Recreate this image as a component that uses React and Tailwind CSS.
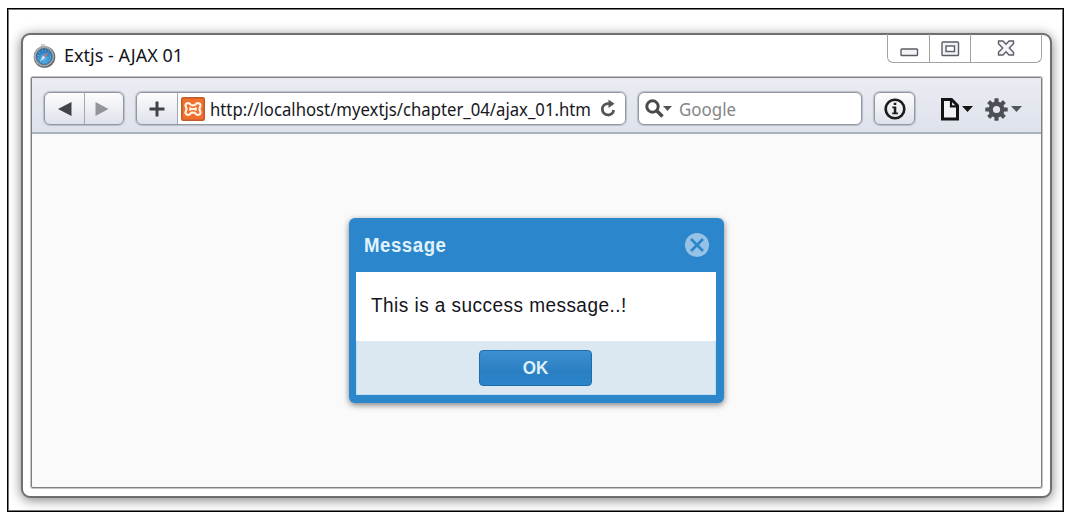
import React from 'react';

const btn =
  'border border-[#9297a2] rounded-[6px] bg-gradient-to-b from-[#fdfdfe] to-[#dfe2ea] shadow-[0_0_1px_1px_#b9bdc7]';

function SafariIcon() {
  return (
    <svg width="23" height="25" viewBox="0 0 23 25" className="block">
      <defs>
        <radialGradient id="dial" cx="50%" cy="65%" r="60%">
          <stop offset="0" stopColor="#5cb8ee" />
          <stop offset="1" stopColor="#1f6fb5" />
        </radialGradient>
      </defs>
      <circle cx="10" cy="3.500" r="1.800" fill="none" stroke="#b4b7bb" strokeWidth="1.2" />
      <circle cx="11.500" cy="14" r="10.800" fill="#64686d" />
      <circle cx="11" cy="13.200" r="10.200" fill="#a4a7aa" />
      <circle cx="11.200" cy="13.600" r="8" fill="url(#dial)" stroke="#4f6679" strokeWidth="0.8" />
      <circle cx="11.2" cy="13.500" r="6.300" fill="none" stroke="#8ccbf0" strokeWidth="1" strokeDasharray="1 2.3" />
      <path d="M15.500 9 12.300 14.500 10 12.500Z" fill="#c4706f" />
      <path d="M7 18.500 10 12.500 12.300 14.500Z" fill="#d5e6f1" />
    </svg>
  );
}

function XamppIcon() {
  return (
    <svg width="24" height="24" viewBox="0 0 24 24" className="block">
      <rect x="0.75" y="0.75" width="22.5" height="22.5" rx="1.5" fill="#f0702c" stroke="#bf5a2a" strokeWidth="1.5" />
      <path
        d="M9.500 7.500C8.500 5.500 5 5.500 4.500 8 4.200 9.500 5.500 10 5.500 12 5.500 14 4.200 14.500 4.500 16 5 18.500 8.500 18.500 9.500 16.500 10.200 15.300 13.800 15.300 14.500 16.500 15.500 18.500 19 18.500 19.500 16 19.800 14.500 18.500 14 18.500 12 18.500 10 19.800 9.500 19.500 8 19 5.500 15.500 5.500 14.500 7.500 13.800 8.700 10.200 8.700 9.500 7.500Z"
        fill="none"
        stroke="#fff3e8"
        strokeWidth="2.200"
      />
      <path d="M8.500 10.500 10 12 8.500 13.500M15.500 10.500 14 12 15.500 13.500M10 12H14" fill="none" stroke="#fff3e8" strokeWidth="1.800" />
    </svg>
  );
}

function Caret({ className }) {
  return (
    <svg width="11" height="6" viewBox="0 0 11 6" className={className}>
      <path d="M0 0H11L5.500 6Z" fill="currentColor" />
    </svg>
  );
}

function WindowControls() {
  return (
    <div className="flex h-[29px] w-[155px] rounded-b-[6px] border border-t-0 border-[#a2a2a2] text-[#5b5d66]">
      <div className="w-[42px] border-r border-[#a2a2a2] pl-[12px] pt-[14px]">
        <svg width="19" height="9" viewBox="0 0 19 9" className="block">
          <rect x="1" y="1" width="16.500" height="6.500" rx="0.8" fill="#f3f3f5" stroke="currentColor" strokeWidth="1.4" />
        </svg>
      </div>
      <div className="w-[41px] border-r border-[#a2a2a2] pl-[11px] pt-[7px]">
        <svg width="19" height="16" viewBox="0 0 19 16" className="block">
          <rect x="1" y="1" width="16.500" height="13.500" rx="0.8" fill="#f3f3f5" stroke="currentColor" strokeWidth="1.4" />
          <rect x="5" y="5" width="8.500" height="5.500" fill="#fff" stroke="currentColor" strokeWidth="1.4" />
        </svg>
      </div>
      <div className="flex-1 pl-[26px] pt-[6px]">
        <svg width="18" height="17" viewBox="0 0 18 17" className="block">
          <path
            d="M1.500 1H6L9 4.300 12 1H16.500V3.800L12.300 8 16.500 12.200V15H12L9 11.700 6 15H1.500V12.200L5.700 8 1.500 3.800Z"
            fill="#f3f3f5"
            stroke="currentColor"
            strokeWidth="1.4"
            strokeLinejoin="round"
          />
        </svg>
      </div>
    </div>
  );
}

function Toolbar() {
  return (
    <div className="flex h-[56px] items-start border-b-2 border-[#a9b1be] bg-gradient-to-b from-[#eaecf2] to-[#dee2eb] pl-[12px] pt-[14px]">
      <div className={'flex h-[33px] w-[80px] ' + btn}>
        <div className="flex w-[40px] items-center border-r border-[#a3a7b0] pl-[13px]">
          <svg width="14" height="14" viewBox="0 0 14 14"><path d="M13.500 0V14L0 7Z" fill="#3f4347" /></svg>
        </div>
        <div className="flex items-center pl-[10px]">
          <svg width="14" height="14" viewBox="0 0 14 14"><path d="M0.500 0V14L13.500 7Z" fill="#919599" /></svg>
        </div>
      </div>
      <div className={'ml-[12px] flex h-[33px] w-[490px] overflow-hidden ' + btn}>
        <div className="flex w-[41px] shrink-0 items-center justify-center border-r border-[#a3a7b0]">
          <svg width="16" height="16" viewBox="0 0 16 16"><path d="M8 0.500V15.500M0.500 8H15.500" stroke="#3f4347" strokeWidth="3" /></svg>
        </div>
        <div className="flex flex-1 items-center bg-white pl-[3px]">
          <XamppIcon />
          <div className="ml-[5px] w-[381px] overflow-hidden">
            <span className="block w-[440px] origin-left scale-x-[0.928] whitespace-nowrap font-['Noto_Sans',sans-serif] text-[18px] leading-[30px] text-[#17171d]">
              http://localhost/myextjs/chapter_04/ajax_01.html
            </span>
          </div>
          <svg width="17" height="19" viewBox="0 0 17 19" className="ml-[9px] shrink-0">
            <path d="M11 4.600H7.500A5.700 5.700 0 1 0 13.700 11" fill="none" stroke="#555" strokeWidth="2.8" />
            <path d="M8.500 0.500 14.500 4.800 8.500 9Z" fill="#555" />
          </svg>
        </div>
      </div>
      <div className="ml-[12px] flex h-[33px] w-[224px] items-center rounded-[6px] border border-[#9297a2] bg-white pl-[6px] shadow-[0_0_1px_1px_#b9bdc7]">
        <svg width="19" height="19" viewBox="0 0 19 19" className="shrink-0">
          <circle cx="7.500" cy="7.500" r="5.700" fill="none" stroke="#4b4b4b" strokeWidth="3" />
          <path d="M11.500 11.500 17.500 17.500" stroke="#4b4b4b" strokeWidth="3.600" />
        </svg>
        <Caret className="-ml-px h-[5px] w-[9px] shrink-0 text-[#555]" />
        <span className="ml-[7px] block origin-left scale-x-[0.94] font-['Noto_Sans',sans-serif] text-[18px] leading-[30px] text-[#858585]">
          Google
        </span>
      </div>
      <div className={'ml-[12px] flex h-[33px] w-[41px] items-center justify-center ' + btn}>
        <svg width="22" height="22" viewBox="0 0 22 22">
          <circle cx="11" cy="11" r="9.300" fill="none" stroke="#1c1c1c" strokeWidth="2.600" />
          <path d="M9.700 4.800H12.300V7H9.700ZM8.300 8.500H12.300V14.500H13.900V16.300H8.300V14.500H9.800V10.200H8.300Z" fill="#1c1c1c" />
        </svg>
      </div>
      <svg width="18" height="23" viewBox="0 0 18 23" className="ml-[26px] mt-[6px] block">
        <path d="M1.500 1.500H10.500L16.500 7.500V21H1.500Z" fill="#f2f3f6" stroke="#141414" strokeWidth="3" />
        <path d="M10 1V8.300H17" fill="none" stroke="#141414" strokeWidth="2.200" />
      </svg>
      <Caret className="ml-[3px] mt-[14px] text-[#141414]" />
      <svg width="23" height="23" viewBox="-11.5 -11.5 23 23" className="ml-[12px] mt-[6px] block">
        <g fill="#4c4f55">
          {[0, 45, 90, 135].map((a) => (
            <rect key={a} x="-2.100" y="-11.200" width="4.200" height="22.400" rx="0.6" transform={`rotate(${a})`} />
          ))}
          <circle r="8" />
        </g>
        <circle r="3.600" fill="#e4e7ee" />
      </svg>
      <Caret className="ml-[3px] mt-[14px] text-[#53565c]" />
    </div>
  );
}

function MessageDialog() {
  return (
    <div className="h-[185px] w-[375px] rounded-[6px] bg-[#2c86cb] px-[7px] shadow-[0_2px_6px_rgba(0,0,0,0.5)]">
      <div className="flex h-[54px] items-center justify-between pl-[8px] pr-[8px]">
        <span className="block origin-left scale-x-[0.93] font-['Liberation_Sans',Arial,sans-serif] text-[20px] font-bold leading-[24px] tracking-[0.6px] text-[#e0f3fc]">
          Message
        </span>
        <svg width="24" height="24" viewBox="0 0 24 24" className="block">
          <circle cx="12" cy="12" r="12" fill="#95c2e5" />
          <path d="M6 6 18 18M18 6 6 18" stroke="#2c86cb" strokeWidth="2.800" />
        </svg>
      </div>
      <div className="h-[69px] w-[360px] bg-white pl-[15px] pt-[21px]">
        <span className="inline-block origin-left scale-x-[0.95] whitespace-nowrap font-['Liberation_Sans',Arial,sans-serif] text-[20px] leading-[24px] tracking-[0.48px] text-[#14141c]">
          This is a success message..!
        </span>
      </div>
      <div className="flex h-[54px] w-[360px] justify-center border border-t-0 border-[#bfdff5] bg-[#dbe7f1] pt-[9px]">
        <button className="flex h-[36px] w-[113px] items-center justify-center rounded-[4px] border-[1.5px] border-[#1d6ba9] bg-gradient-to-b from-[#3d90d1] from-0% via-[#2a7fc2] via-60% to-[#2a85ca] font-['Liberation_Sans',Arial,sans-serif] text-[18px] font-bold text-[#dff1fb]">
          <span className="block scale-x-[0.95]">OK</span>
        </button>
      </div>
    </div>
  );
}

export default function App() {
  return (
    <div className="h-[521px] w-[1070px] overflow-hidden bg-white pl-[7px] pt-[8px]">
      <div className="h-[504px] w-[1057px] overflow-hidden border border-black bg-white pl-[13px] pt-[24px] shadow-[inset_0_0_0_1px_#777]">
        <div className="h-[465px] w-[1031px] rounded-[9px] border-2 border-[#6f6f6f] bg-white px-[8px] shadow-[0_2px_12px_rgba(0,0,0,0.5)]">
          <div className="flex h-[42px] items-start">
            <div className="ml-[2px] mt-[8px]"><SafariIcon /></div>
            <span className="ml-[8px] mt-[8px] block origin-left whitespace-nowrap font-['Noto_Sans',sans-serif] text-[18px] leading-[24px] text-[#14141c]">
              Extjs - AJAX 01
            </span>
            <div className="ml-auto -mt-px"><WindowControls /></div>
          </div>
          <div className="h-[411px] w-[1011px] overflow-hidden rounded-[2px] border border-[#808080] bg-[#fafafa] shadow-[0_0_0_1px_#c4c4c4]">
            <Toolbar />
            <div className="flex justify-center pr-[1px] pt-[84px]">
              <MessageDialog />
            </div>
          </div>
        </div>
      </div>
    </div>
  );
}
